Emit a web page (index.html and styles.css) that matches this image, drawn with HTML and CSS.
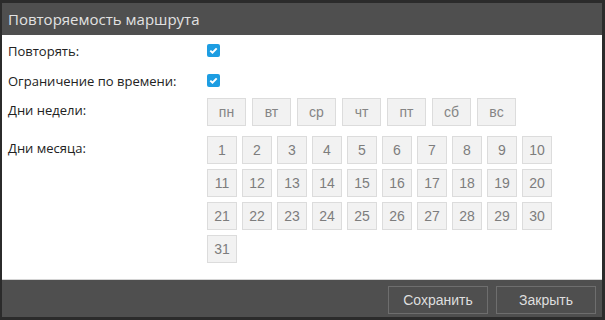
FILE: index.html
```html
<!DOCTYPE html>
<html lang="ru">
  <head>
    <meta charset="UTF-8" />
    <meta name="viewport" content="width=device-width, initial-scale=1.0" />
    <title>Повторяемость маршрута</title>
    <link rel="stylesheet" href="styles.css">
  </head>
  <body>
    <div class="dialog">
      <div class="dialog-header">Повторяемость маршрута</div>
      <div class="dialog-body">
        <div class="row row-check">
          <div class="label">Повторять:</div>
          <span class="check">
            <svg width="13" height="13" viewBox="0 0 13 13"><path d="M3.3 6.6 L5.5 8.7 L9.7 4.4" fill="none" stroke="#fff" stroke-width="2" /></svg>
          </span>
        </div>
        <div class="row row-check second">
          <div class="label">Ограничение по времени:</div>
          <span class="check">
            <svg width="13" height="13" viewBox="0 0 13 13"><path d="M3.3 6.6 L5.5 8.7 L9.7 4.4" fill="none" stroke="#fff" stroke-width="2" /></svg>
          </span>
        </div>
        <div class="row row-week">
          <div class="label">Дни недели:</div>
          <div class="week">
            <button class="day">пн</button>
            <button class="day">вт</button>
            <button class="day">ср</button>
            <button class="day">чт</button>
            <button class="day">пт</button>
            <button class="day">сб</button>
            <button class="day">вс</button>
          </div>
        </div>
        <div class="row row-month">
          <div class="label">Дни месяца:</div>
          <div class="month" id="month"></div>
        </div>
      </div>
      <div class="dialog-footer">
        <button class="footer-btn">Сохранить</button>
        <button class="footer-btn">Закрыть</button>
      </div>
    </div>
    <script>
      const month = document.getElementById("month");
      for (let i = 1; i <= 31; i++) {
        const b = document.createElement("button");
        b.className = "date";
        b.textContent = i;
        month.appendChild(b);
      }
    </script>
  </body>
</html>
```

FILE: styles.css
```css
body {
  margin: 0;
  background: #2b2b2b;
  font-family: "Open Sans", "Noto Sans", sans-serif;
}

.dialog {
  width: 600px;
  height: 314px;
  margin: 3px 0 0 2px;
  background: #fff;
  display: flex;
  flex-direction: column;
}

.dialog-header {
  height: 32px;
  background: #4f4f4f;
  color: #e2e2e2;
  font-size: 15px;
  line-height: 32px;
  padding-left: 6px;
}

.dialog-body {
  flex: 1;
  padding: 9px 0 0 6px;
}

.row {
  display: flex;
}

.label {
  width: 199px;
  font-size: 13px;
  color: #222;
}

.row-check {
  height: 13px;
  align-items: center;
  margin-bottom: 17px;
}

.row-check.second {
  margin-bottom: 11px;
}

.row-check .label {
  line-height: 13px;
  padding-top: 2px;
}

.check {
  width: 13px;
  height: 13px;
  border-radius: 2px;
  background: #1d9de2;
  display: block;
}

.check svg {
  display: block;
}

.row-week {
  margin-bottom: 10px;
}

.row-week .label,
.row-month .label {
  line-height: 18px;
  padding-top: 3px;
}

.week {
  display: flex;
  gap: 6px;
}

.day,
.date {
  box-sizing: border-box;
  height: 28px;
  margin: 0;
  padding: 0;
  background: #f2f2f2;
  border: 1px solid #dcdcdc;
  color: #7d7d7d;
  font-family: "Liberation Sans", Arial, sans-serif;
  font-size: 14px;
}

.day {
  width: 39px;
  color: #858585;
}

.month {
  display: grid;
  grid-template-columns: repeat(10, 30px);
  grid-auto-rows: 28px;
  gap: 5px;
}

.date {
  width: 30px;
}

.dialog-footer {
  height: 38px;
  box-sizing: border-box;
  border-top: 1px solid #d4d4d4;
  background: #4f4f4f;
  display: flex;
  justify-content: flex-end;
  align-items: center;
  gap: 8px;
  padding: 2px 6px 0 0;
}

.footer-btn {
  width: 100px;
  height: 28px;
  background: #4f4f4f;
  border: 1px solid #6e6e6e;
  color: #dedede;
  font-family: "Liberation Sans", Arial, sans-serif;
  font-size: 14px;
}
```
